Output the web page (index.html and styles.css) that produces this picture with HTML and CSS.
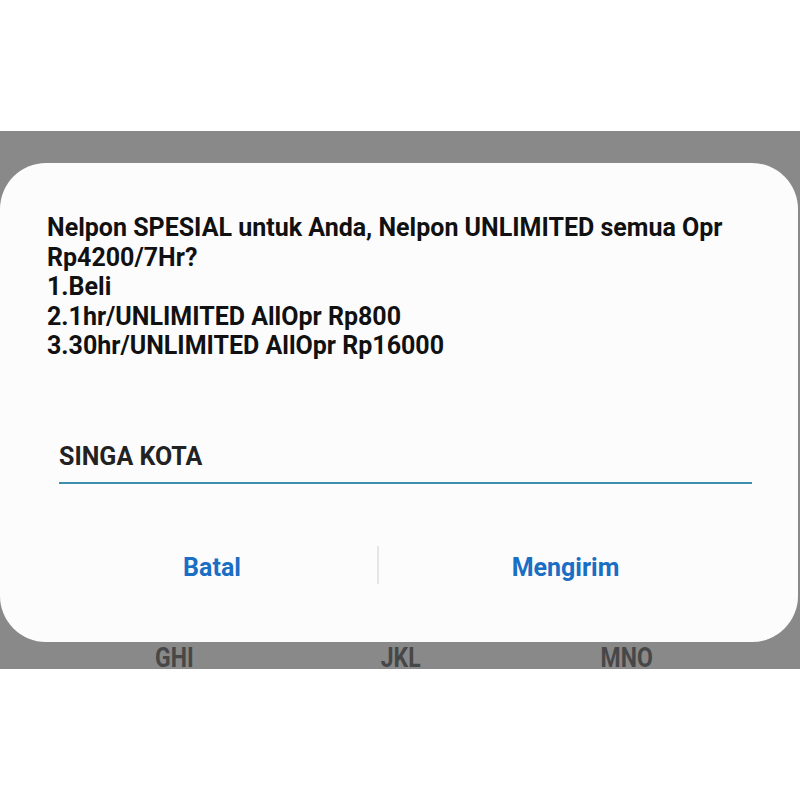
FILE: index.html
```html
<!DOCTYPE html>
<html lang="en">
<head>
  <meta charset="UTF-8" />
  <meta name="viewport" content="width=device-width, initial-scale=1.0"/>
  <title>USSD</title>
  <link rel="stylesheet" href="styles.css">
</head>
<body>
  <div class="screen">
    <div class="dialog">
      <div class="message">
        Nelpon SPESIAL untuk Anda, Nelpon UNLIMITED semua Opr<br>
        Rp4200/7Hr?<br>
        1.Beli<br>
        2.1hr/UNLIMITED AllOpr Rp800<br>
        3.30hr/UNLIMITED AllOpr Rp16000
      </div>
      <div class="field">SINGA KOTA</div>
      <div class="actions">
        <button class="action action-cancel">Batal</button>
        <span class="divider"></span>
        <button class="action action-send">Mengirim</button>
      </div>
    </div>
    <div class="keys">
      <span class="key key-ghi">GHI</span>
      <span class="key key-jkl">JKL</span>
      <span class="key key-mno">MNO</span>
    </div>
  </div>
</body>
</html>
```

FILE: styles.css
```css
body {
  margin: 0;
  background: #ffffff;
  font-family: Roboto, "Liberation Sans", sans-serif;
}

.screen {
  margin-top: 131px;
  height: 538px;
  background: #898989;
  padding-top: 32px;
  box-sizing: border-box;
}

.dialog {
  width: 798px;
  height: 479px;
  box-sizing: border-box;
  background: #fcfcfc;
  border-radius: 46px;
  padding: 50px 46px 0 47px;
  display: flex;
  flex-direction: column;
}

.message {
  font-size: 25px;
  line-height: 29.5px;
  font-weight: 700;
  color: #111111;
}

.field {
  margin: 81px 0 0 12px;
  padding-bottom: 11px;
  font-size: 25px;
  font-weight: 700;
  color: #222222;
  border-bottom: 2px solid #3d8fad;
}

.actions {
  display: flex;
  align-items: center;
  margin-top: 62px;
}

.action {
  border: none;
  background: none;
  font-family: inherit;
  font-size: 25px;
  font-weight: 700;
  color: #1a6ec4;
  padding: 6px 0 0;
}

.action-cancel {
  width: 330px;
}

.action-send {
  flex: 1;
}

.divider {
  width: 2px;
  height: 38px;
  background: #e6e6e6;
}

.keys {
  display: flex;
  height: 27px;
  box-sizing: border-box;
  padding-top: 3px;
  align-items: center;
  font-size: 23px;
  line-height: 23px;
  font-weight: 700;
  color: #474747;
}

.key {
  display: inline-block;
  transform: scaleY(1.2);
}

.key-ghi { margin-left: 155px; }
.key-jkl { margin-left: 187px; }
.key-mno { margin-left: 180px; }
```
